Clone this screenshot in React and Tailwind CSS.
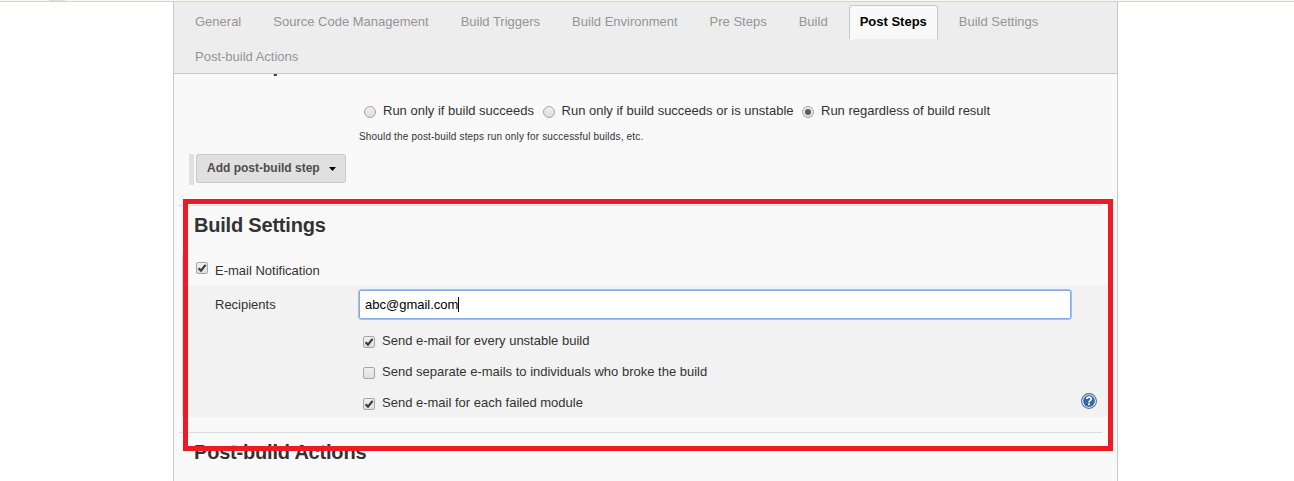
import React, { useState } from 'react';

const tabs = [
  'General',
  'Source Code Management',
  'Build Triggers',
  'Build Environment',
  'Pre Steps',
  'Build',
  'Post Steps',
  'Build Settings',
  'Post-build Actions',
];

function Radio({ checked, onClick }) {
  return (
    <svg onClick={onClick} className="mt-[3px] block size-[13px] shrink-0" viewBox="0 0 13 13">
      <defs>
        <linearGradient id="radioFill" x1="0" y1="0" x2="0" y2="1">
          <stop offset="0" stopColor="#f0f0f0" />
          <stop offset="1" stopColor="#dcdcdc" />
        </linearGradient>
      </defs>
      <circle cx="6" cy="6" r="5.5" fill="url(#radioFill)" stroke="#a6a6a6" />
      {checked && <circle cx="6" cy="6" r="3" fill="#5c5c5c" />}
    </svg>
  );
}

function Checkbox({ checked, onClick }) {
  return (
    <svg onClick={onClick} className="block size-[13px] shrink-0" viewBox="0 0 13 13">
      <defs>
        <linearGradient id="boxFill" x1="0" y1="0" x2="0" y2="1">
          <stop offset="0" stopColor="#f0f0f0" />
          <stop offset="1" stopColor="#dedede" />
        </linearGradient>
      </defs>
      <rect x="0.5" y="0.5" width="11" height="11" rx="1.6" fill="url(#boxFill)" stroke="#a6a6a6" />
      {checked && <path d="M2.6 6.2 5 8.6 9.6 2.9" fill="none" stroke="#3c3c3c" strokeWidth="2.2" />}
    </svg>
  );
}

function HelpIcon() {
  return (
    <svg className="block size-4" viewBox="0 0 16 16">
      <circle cx="8" cy="8" r="7.4" fill="#fff" stroke="#4a6fa5" strokeWidth="1.1" />
      <circle cx="8" cy="8" r="5.9" fill="#3a66a6" />
      <path d="M5.8 6.1C5.8 3.4 10.2 3.4 10.2 6c0 1.7-2.2 1.7-2.2 3.4" fill="none" stroke="#fff" strokeWidth="1.7" />
      <rect x="7.1" y="10.4" width="1.8" height="1.8" fill="#fff" />
    </svg>
  );
}

function App() {
  const [active, setActive] = useState('Post Steps');
  const [runIf, setRunIf] = useState(2);
  const [notify, setNotify] = useState(true);
  const [options, setOptions] = useState([true, false, true]);

  const toggle = (i) => setOptions(options.map((v, n) => (n === i ? !v : v)));

  return (
    <div className="relative h-[481px] w-[1294px] overflow-hidden bg-white font-['Liberation_Sans',Arial,sans-serif] text-[13px] leading-4 text-[#333]">
      {/* bottom edge of the page above */}
      <div className="h-[2px] border-b border-[#d3d5c9] bg-[#f8f9f3] pl-[49px]">
        <div className="h-px w-4 bg-[#dfe0da]" />
      </div>

      <div className="ml-[173px] h-[479px] w-[945px] border-x border-[#c8c8c8] bg-[#f9f9f9]">
        <nav className="flex h-[72px] flex-wrap content-start gap-x-[10px] gap-y-px border-b border-[#c8c8c8] bg-[#ededed] pt-[3px] pl-[10px]">
          {tabs.map((tab) => (
            <button
              key={tab}
              onClick={() => setActive(tab)}
              className={
                tab === active
                  ? 'h-[34px] rounded-t border border-b-0 border-[#c8c8c8] bg-[#f9f9f9] px-[10px] pb-px font-bold whitespace-nowrap text-black'
                  : 'h-[34px] border border-b-0 border-transparent px-[10px] pb-px whitespace-nowrap text-[#959595]'
              }
            >
              {tab}
            </button>
          ))}
        </nav>

        <div className="h-[407px] overflow-hidden">
          <h2 className="-mt-[21px] h-6 pl-5 text-[20px] leading-6 font-bold tracking-[-0.2px]">Post Steps</h2>

          <div className="mt-[26px] ml-[190px] flex h-[17px]">
            {['Run only if build succeeds', 'Run only if build succeeds or is unstable', 'Run regardless of build result'].map((label, i) => (
              <label key={label} className="mr-[8.5px] flex gap-[6px] whitespace-nowrap">
                <Radio checked={runIf === i} onClick={() => setRunIf(i)} />
                {label}
              </label>
            ))}
          </div>
          <div className="mt-[11px] ml-[185px] h-3 text-[10px] leading-3 tracking-[0.17px] whitespace-nowrap">
            Should the post-build steps run only for successful builds, etc.
          </div>

          <div className="mt-[11px] ml-[15px] flex h-[31px] w-[157px] border-l-[5px] border-[#e0e0e0] pl-[2px]">
            <button className="flex h-[29px] w-[150px] items-center rounded-[3px] border border-[#c8c8c8] bg-[#e0e0e0] pl-[10px] text-[12px] font-bold whitespace-nowrap text-[#4d4d4d]">
              <span className="pb-[2px]">Add post-build step</span>
              <svg className="ml-[9px] h-1 w-[7px]" viewBox="0 0 7 4">
                <path d="M0 0h7L3.5 4z" fill="#000" />
              </svg>
            </button>
          </div>

          <section className="mt-5 h-[227px]">
            <div className="ml-[5px] h-px w-[923px] bg-[#dcdcdc]" />
            <h2 className="mt-[7px] pl-5 text-[20px] leading-6 font-bold tracking-[-0.2px]">Build Settings</h2>
            <div className="mt-[17px] ml-2 h-[163px] w-[925px] border-l border-[#dedede]">
              <div className="flex h-[31px] pt-2 pl-[13px]">
                <Checkbox checked={notify} onClick={() => setNotify(!notify)} />
                <span className="mt-px ml-[6px]">E-mail Notification</span>
              </div>
              <div className="flex h-[132px] bg-[#f2f2f2] pt-1 pl-8">
                <div className="w-[143px] pt-2">Recipients</div>
                <div className="w-[714px]">
                  <div className="h-[31px] rounded-[3px] border border-[#a0bff3]">
                    <div className="flex h-[29px] items-center rounded-[2px] border border-[#86aaeb] bg-white pl-[5px] text-black">
                      abc@gmail.com
                      <span className="h-[15px] w-px bg-black" />
                    </div>
                  </div>
                  <div className="mt-[13px] flex flex-col gap-[15px] pl-[5px]">
                    {['Send e-mail for every unstable build', 'Send separate e-mails to individuals who broke the build', 'Send e-mail for each failed module'].map((label, i) => (
                      <label key={label} className="flex h-4 gap-[6px]">
                        <span className="mt-[3px]">
                          <Checkbox checked={options[i]} onClick={() => toggle(i)} />
                        </span>
                        {label}
                      </label>
                    ))}
                  </div>
                </div>
                <div className="mt-[104px] ml-[9px]">
                  <HelpIcon />
                </div>
              </div>
            </div>
          </section>

          <div className="ml-[5px] h-px w-[923px] bg-[#dcdcdc]" />
          <h2 className="mt-[7px] pl-5 text-[20px] leading-6 font-bold tracking-[-0.2px]">Post-build Actions</h2>
        </div>
      </div>

      {/* highlight frame over the build settings */}
      <div className="pointer-events-none absolute top-[199px] left-[183px] h-[252px] w-[930px] border-[5px] border-[#ed1c24]" />
    </div>
  );
}

export default App;
